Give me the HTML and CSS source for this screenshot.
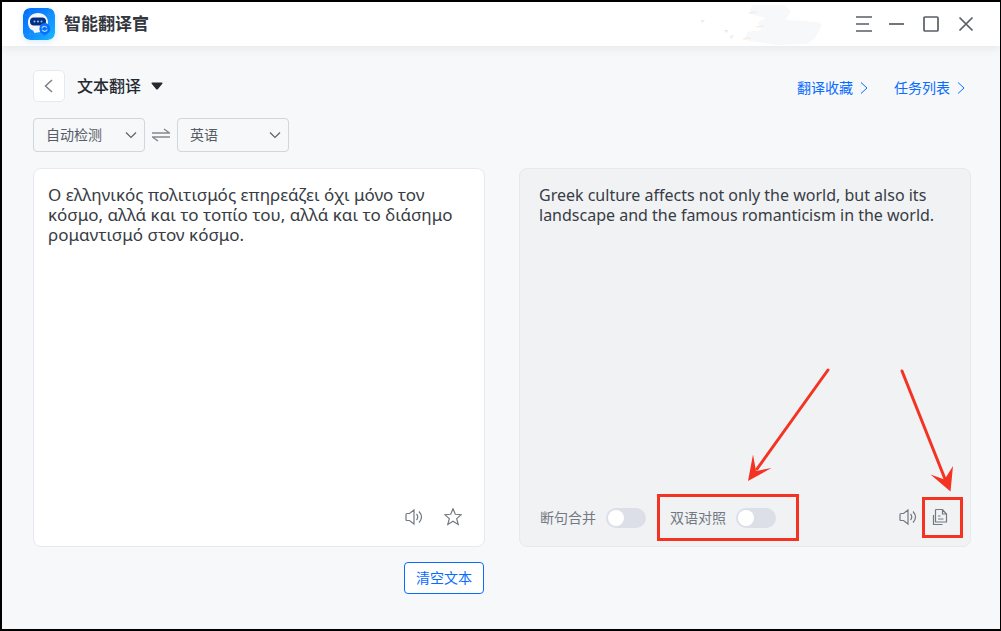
FILE: index.html
```html
<!DOCTYPE html>
<html lang="zh-CN">
<head>
<meta charset="utf-8">
<title>智能翻译官</title>
<link rel="stylesheet" href="styles.css">
</head>
<body>
<div class="window">
  <header class="titlebar">
    <svg class="logo" viewBox="0 0 32 32" aria-hidden="true">
      <defs>
        <linearGradient id="logo-bg" x1="0" y1="0" x2="1" y2="1">
          <stop offset="0" stop-color="#006bff"/>
          <stop offset="0.55" stop-color="#118cff"/>
          <stop offset="1" stop-color="#16bbff"/>
        </linearGradient>
      </defs>
      <rect width="32" height="32" rx="7" fill="url(#logo-bg)"/>
      <path d="M7 0v32M26 0v32M0 7h32M0 26h32" stroke="#4db4ff" stroke-opacity=".2" stroke-width="1"/>
      <path d="M15 5c-6 0-10 4-10 9 0 5 2 7.500 5 8.500l1.500 2.500 6-1c4-1 7.500-4 7.500-10 0-5-4-9-10-9z" fill="#f2f5fa"/>
      <rect x="7" y="9.500" width="16" height="8" rx="4" fill="#062c80"/>
      <circle cx="11.500" cy="13.500" r="1" fill="#8fc6ff"/>
      <circle cx="15" cy="13.500" r="1" fill="#8fc6ff"/>
      <circle cx="18.500" cy="13.500" r="1" fill="#8fc6ff"/>
      <path d="M21.500 15a5.800 5.800 0 0 1 3.500 10.300l-4 2.500-.5-1.500A5.800 5.800 0 0 1 21.500 15z" fill="#0870fa"/>
      <path d="M18.800 20.300a2.700 2.700 0 0 1 5-.6M24.200 21.300a2.700 2.700 0 0 1-5 .6" fill="none" stroke="#a5d8ff" stroke-width="1.200"/>
    </svg>
    <span class="app-name">智能翻译官</span>
    <svg class="smudge" viewBox="0 0 130 44" aria-hidden="true">
      <path d="M54 3h32l7 6-5 9 32 2 4 3-7 13-7 6-31 1-33-5 3-8 14-2-3-8 8-4-17-4z" fill="#f7f8fa"/>
      <path d="M3 18h4l-3 3zM26 28h4l-1 3zM32 34l4-1-3 4z" fill="#e9eaec"/>
      <path d="M51 11l7-1 1 1M58 25l7-1 1 1M45 37l6-1 2 1" fill="none" stroke="#fce7dc"/>
    </svg>
    <div class="controls">
      <button class="control" aria-label="菜单"><svg viewBox="0 0 18 18"><path d="M1 2h16M1 9h13M1 16h16"/></svg></button>
      <button class="control" aria-label="最小化"><svg viewBox="0 0 18 18"><path d="M0 9h15"/></svg></button>
      <button class="control" aria-label="最大化"><svg viewBox="0 0 18 18"><rect x="1" y="2" width="14" height="14" rx="1"/></svg></button>
      <button class="control" aria-label="关闭"><svg viewBox="0 0 18 18"><path d="M2.500 2.500l13 13M15.500 2.500l-13 13"/></svg></button>
    </div>
  </header>

  <main class="content">
    <div class="heading">
      <button class="back" aria-label="返回"><svg viewBox="0 0 10 14"><path d="M8 1L1.500 7 8 13"/></svg></button>
      <h1 class="title"><button class="mode">文本翻译<svg class="caret" viewBox="0 0 12 8"><path d="M1 .5h10q1 .5.3 1.300L7 7q-1 1-2 0L.7 1.800Q0 1 1 .5z"/></svg></button></h1>
      <nav class="links">
        <a class="link" href="#favorites">翻译收藏<svg viewBox="0 0 8 12"><path d="M1 .5L7 6l-6 5.500"/></svg></a>
        <a class="link" href="#tasks">任务列表<svg viewBox="0 0 8 12"><path d="M1 .5L7 6l-6 5.500"/></svg></a>
      </nav>
    </div>

    <div class="languages">
      <div class="picker">
        <select class="select" aria-label="源语言"><option>自动检测</option></select>
        <svg class="chevron" viewBox="0 0 12 8"><path d="M1 1.500l5 5 5-5"/></svg>
      </div>
      <button class="swap" aria-label="交换语言"><svg viewBox="0 0 18 14"><path d="M0 5h17.500L12 1M18 9H.5L6 13"/></svg></button>
      <div class="picker">
        <select class="select" aria-label="目标语言"><option>英语</option></select>
        <svg class="chevron" viewBox="0 0 12 8"><path d="M1 1.500l5 5 5-5"/></svg>
      </div>
    </div>

    <div class="panels">
      <section class="panel source">
        <textarea class="text" aria-label="原文" spellcheck="false">Ο ελληνικός πολιτισμός επηρεάζει όχι μόνο τον κόσμο, αλλά και το τοπίο του, αλλά και το διάσημο ρομαντισμό στον κόσμο.</textarea>
        <div class="tools">
          <button class="tool" aria-label="朗读原文"><svg viewBox="0 0 18 18"><path d="M1 6.500Q1 5.500 2 5.500h2.500L9 2v14l-4.500-3.500H2q-1 0-1-1zM11.500 6q2.500 3 0 6M14 3.500q5 5.500 0 11"/></svg></button>
          <button class="tool" aria-label="收藏"><svg viewBox="0 0 18 18"><path d="M9 .8l2.300 5.500 5.900.4-4.500 3.900 1.500 5.800L9 13.200l-5.200 3.200 1.500-5.800L.8 6.700l5.900-.4z"/></svg></button>
        </div>
      </section>

      <section class="panel result">
        <p class="text">Greek culture affects not only the world, but also its landscape and the famous romanticism in the world.</p>
        <div class="tools">
          <label class="option">断句合并<input class="switch" type="checkbox" role="switch"></label>
          <label class="option marked">双语对照<input class="switch" type="checkbox" role="switch"></label>
          <button class="tool listen" aria-label="朗读译文"><svg viewBox="0 0 18 18"><path d="M1 6.500Q1 5.500 2 5.500h2.500L9 2v14l-4.500-3.500H2q-1 0-1-1zM11.500 6q2.500 3 0 6M14 3.500q5 5.500 0 11"/></svg></button>
          <button class="tool copy marked" aria-label="复制译文"><svg viewBox="0 0 18 18"><path d="M5 1.500h6.500L15.500 6v8H4.500V2zM11.500 1.500V6h4M2.500 7v9.500h9M7 8h2.500M7 11h5.500"/></svg></button>
        </div>
        <svg class="arrows" viewBox="740 360 230 140" aria-hidden="true">
          <path class="shaft" d="M828 370L757 469M902 371l43 108"/>
          <path class="head" d="M748 481l5-26.500 3 16.500 15.500-3zM950.500 491.500L930.500 474.500l14 5 8.500-13.500z"/>
        </svg>
      </section>
    </div>

    <div class="actions">
      <button class="clear">清空文本</button>
    </div>
  </main>
</div>
</body>
</html>
```

FILE: styles.css
```css
* {
  box-sizing: border-box;
}

body {
  margin: 0;
  font-family: "Noto Sans", "Noto Sans CJK SC", sans-serif;
  font-size: 14px;
  color: #383c44;
}

button,
select,
textarea {
  margin: 0;
  padding: 0;
  border: 0;
  background: none;
  font: inherit;
  color: inherit;
}

svg {
  display: block;
  flex: none;
}

.window {
  display: flex;
  flex-direction: column;
  min-height: 100vh;
  border: 2px solid #000;
  border-right-width: 1px;
  background: #f6f8fa;
}

.titlebar {
  display: flex;
  align-items: center;
  height: 44px;
  padding: 0 25px 0 21px;
  background: #fff;
  box-shadow: 0 2px 10px rgba(30, 40, 70, 0.08);
}

.logo {
  width: 32px;
  height: 32px;
  border-radius: 7px;
  box-shadow: 0 2px 6px rgba(20, 110, 255, 0.15);
}

.app-name {
  margin-left: 9px;
  font-size: 17px;
  line-height: 24px;
  font-weight: 700;
  color: #33373d;
}

.smudge {
  width: 130px;
  height: 44px;
  margin-left: auto;
}

.controls {
  display: flex;
  gap: 16px;
  margin-left: 27px;
}

.control svg {
  width: 18px;
  height: 18px;
  fill: none;
  stroke: #5a5e63;
  stroke-width: 1.7;
}

.content {
  flex: 1;
  display: flex;
  flex-direction: column;
  padding: 24px 29px 35px 31px;
}

.heading {
  display: flex;
  align-items: center;
}

.back {
  display: grid;
  place-items: center;
  width: 32px;
  height: 32px;
  border: 1px solid #e6eaf0;
  border-radius: 5px;
  background: #fff;
}

.back svg {
  width: 10px;
  height: 14px;
  fill: none;
  stroke: #7b8087;
  stroke-width: 1.5;
}

.title {
  margin: 0 0 0 12px;
  font-size: 16px;
  line-height: 24px;
  font-weight: 500;
  color: #24282f;
}

.mode {
  display: flex;
  align-items: center;
  gap: 10px;
}

.caret {
  width: 12px;
  height: 8px;
  fill: #24282f;
}

.links {
  display: flex;
  gap: 26px;
  margin-left: auto;
  padding: 4px 6px 0 0;
}

.link {
  display: flex;
  align-items: center;
  gap: 7px;
  line-height: 20px;
  color: #0a6cff;
  text-decoration: none;
}

.link svg {
  width: 8px;
  height: 12px;
  fill: none;
  stroke: #0a6cff;
}

.languages {
  display: flex;
  align-items: center;
  gap: 7px;
  margin: 16px 0;
}

.picker {
  display: grid;
  align-items: center;
  width: 112px;
}

.select {
  grid-area: 1 / 1;
  height: 34px;
  padding: 0 30px 2px 12px;
  border: 1px solid #d0d6df;
  border-radius: 4px;
  appearance: none;
  color: #575c66;
}

.chevron {
  grid-area: 1 / 1;
  justify-self: end;
  width: 12px;
  height: 8px;
  margin-right: 8px;
  fill: none;
  stroke: #5c616b;
  stroke-width: 1.2;
  pointer-events: none;
}

.swap svg {
  width: 18px;
  height: 14px;
  fill: none;
  stroke: #85898f;
  stroke-width: 1.5;
}

.panels {
  flex: 1;
  display: grid;
  grid-template-columns: 1fr 1fr;
  gap: 34px;
}

.panel {
  position: relative;
  display: flex;
  flex-direction: column;
  border: 1px solid #e5e9f1;
  border-radius: 8px;
}

.source {
  padding: 16px 14px 19px;
  background: #fff;
}

.result {
  padding: 16px 20px 19px 19px;
  background: #f0f2f4;
}

.text {
  flex: 1;
  margin: 0;
  font-size: 16px;
  line-height: 20px;
  resize: none;
  outline: none;
}

.source .text {
  font-size: 17px;
}

.tools {
  display: flex;
  align-items: center;
  height: 20px;
}

.tool svg {
  width: 18px;
  height: 18px;
  fill: none;
  stroke: #737983;
  stroke-width: 1.2;
}

.source .tools {
  justify-content: flex-end;
  gap: 21px;
  padding-right: 8px;
}

.result .tools {
  padding-left: 1px;
}

.option {
  display: flex;
  align-items: center;
  gap: 10px;
  margin-right: 24px;
  padding-top: 2px;
  line-height: 20px;
  color: #737983;
}

.switch {
  display: flex;
  align-items: center;
  width: 40px;
  height: 20px;
  margin: 0;
  padding: 2px;
  border-radius: 10px;
  appearance: none;
  background: #dcdfe7;
}

.switch::before {
  content: "";
  width: 16px;
  height: 16px;
  border-radius: 50%;
  background: #fff;
}

.switch:checked {
  justify-content: flex-end;
  background: #0a6cff;
}

.listen {
  margin-left: auto;
}

.copy {
  margin: 0 1px 0 14px;
}

.marked {
  position: relative;
}

.marked::after {
  content: "";
  position: absolute;
  inset: -12px -23px -13px -13px;
  border: 3px solid #f43322;
  pointer-events: none;
}

.copy.marked::after {
  inset: -11px -14px -12px -9px;
}

.arrows {
  position: absolute;
  right: 0;
  bottom: 46px;
  width: 230px;
  height: 140px;
  pointer-events: none;
}

.shaft {
  fill: none;
  stroke: #f43322;
  stroke-width: 3;
  stroke-linecap: round;
}

.head {
  fill: #f43322;
}

.actions {
  display: grid;
  grid-template-columns: 1fr 1fr;
  gap: 36px;
  margin-top: 15px;
}

.clear {
  justify-self: end;
  width: 80px;
  height: 32px;
  padding-bottom: 2px;
  border: 1px solid #0a6cff;
  border-radius: 4px;
  background: #fff;
  color: #0a6cff;
}
```
